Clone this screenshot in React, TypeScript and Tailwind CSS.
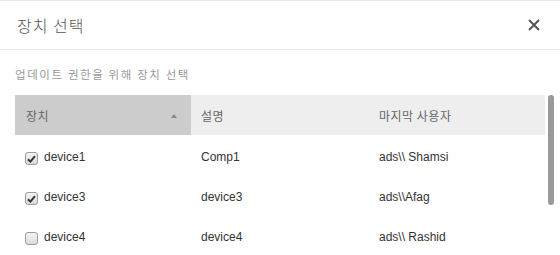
import React from "react";

const rows = [
  { name: "device1", desc: "Comp1", user: "ads\\\\ Shamsi", checked: true },
  { name: "device3", desc: "device3", user: "ads\\\\Afag", checked: true },
  { name: "device4", desc: "device4", user: "ads\\\\ Rashid", checked: false },
];

function Check({ checked }: { checked: boolean }) {
  return (
    <span className="flex h-[13px] w-[13px] shrink-0 items-center justify-center rounded-[3px] border border-[#9a9a9a] bg-gradient-to-b from-[#f4f4f4] to-[#dcdcdc]">
      {checked && (
        <svg width="9" height="8" viewBox="0 0 9 8">
          <path d="M1 4.2 L3.4 6.6 L8 1.2" fill="none" stroke="#333" strokeWidth="2" />
        </svg>
      )}
    </span>
  );
}

export default function App() {
  const kr = { fontFamily: '"Noto Sans CJK KR", "Liberation Sans", sans-serif' };
  const en = { fontFamily: '"Liberation Sans", "Noto Sans CJK KR", sans-serif' };
  return (
    <div className="h-[255px] w-[560px] overflow-hidden border-t border-[#e6e6e6] bg-white" style={en}>
      <div className="flex h-[49px] items-center justify-between border-b border-[#e6e6e6] pl-[17px] pr-[20px]">
        <span className="text-[16px] font-light tracking-[1px] text-[#555]" style={kr}>장치 선택</span>
        <svg width="12" height="12" viewBox="0 0 12 12">
          <path d="M1 1 L11 11 M11 1 L1 11" stroke="#555" strokeWidth="2" />
        </svg>
      </div>
      <div className="px-[15px]">
        <div className="pt-[16px] text-[11.5px] leading-[16px] tracking-[1.6px] text-[#9a9a9a]" style={kr}>
          업데이트 권한을 위해 장치 선택
        </div>
        <div className="relative mt-[13px] w-[530px]">
          <div className="grid h-[40px] grid-cols-[176px_178px_176px] items-center text-[12px] tracking-[0.5px] text-[#666]" style={kr}>
            <div className="flex h-full items-center justify-between bg-[#cccccc] pl-[11px] pr-[14px] pt-[1px]">
              <span>장치</span>
              <svg width="6" height="4" viewBox="0 0 6 4">
                <path d="M0 4 L3 0 L6 4 Z" fill="#888" />
              </svg>
            </div>
            <div className="flex h-full items-center bg-[#eeeeee] pl-[10px] pt-[1px]">설명</div>
            <div className="flex h-full items-center bg-[#eeeeee] pl-[10px] pt-[1px]">마지막 사용자</div>
          </div>
          {rows.map((r) => (
            <div key={r.name} className="grid h-[40px] grid-cols-[176px_178px_176px] items-center pt-[4px] text-[12px] text-[#333]">
              <div className="flex items-center gap-[6px] pl-[10px]">
                <span className="mt-[3px]"><Check checked={r.checked} /></span>
                <span>{r.name}</span>
              </div>
              <div className="pl-[10px]">{r.desc}</div>
              <div className="pl-[10px]">{r.user}</div>
            </div>
          ))}
          <div className="absolute left-[533px] top-0 h-[110px] w-[6px] rounded-full bg-[#9a9a9a]" />
        </div>
      </div>
    </div>
  );
}
